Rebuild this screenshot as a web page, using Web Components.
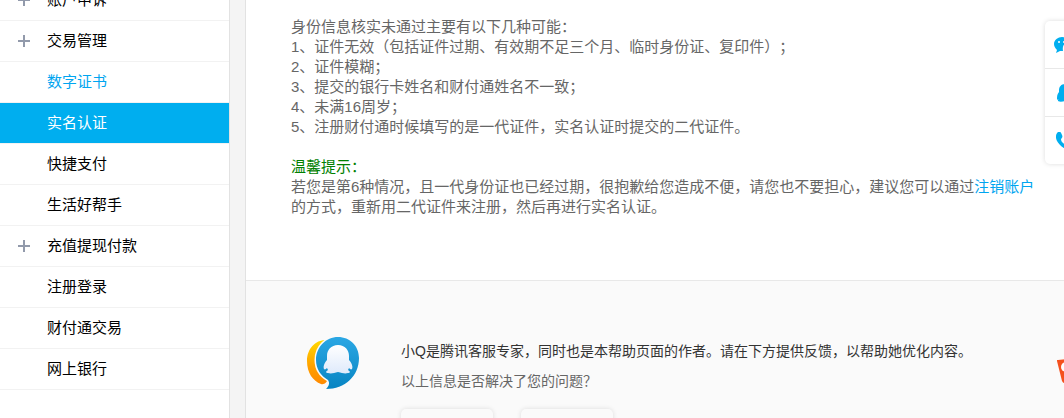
<!DOCTYPE html>
<html lang="zh-CN">
<head>
<meta charset="utf-8">
<meta name="viewport" content="width=device-width, initial-scale=1">
<title>实名认证</title>
<style>
html, body {
  height: 100%;
}
body {
  margin: 0;
  overflow: hidden;
  background: #f4f4f4;
  color: #666;
  font: 15px/20px "Liberation Sans", "Noto Sans CJK SC", sans-serif;
  text-spacing-trim: space-all;
}
</style>
</head>
<body>
<help-page>
  <side-nav slot="nav">
    <nav-item expandable>账户申诉</nav-item>
    <nav-item expandable>交易管理</nav-item>
    <nav-item linked>数字证书</nav-item>
    <nav-item active>实名认证</nav-item>
    <nav-item>快捷支付</nav-item>
    <nav-item>生活好帮手</nav-item>
    <nav-item expandable>充值提现付款</nav-item>
    <nav-item>注册登录</nav-item>
    <nav-item>财付通交易</nav-item>
    <nav-item>网上银行</nav-item>
  </side-nav>
  <help-article></help-article>
  <help-feedback>
    <span slot="intro">小Q是腾讯客服专家，同时也是本帮助页面的作者。请在下方提供反馈，以帮助她优化内容。</span>
    <span slot="question">以上信息是否解决了您的问题？</span>
  </help-feedback>
</help-page>
<contact-bar></contact-bar>
<feedback-badge></feedback-badge>

<script>
// 由模板字符串创建带 shadow root 的元素
const define = (name, html, setup) => {
  const template = document.createElement('template');
  template.innerHTML = html;

  customElements.define(name, class extends HTMLElement {
    constructor() {
      super();
      this.attachShadow({ mode: 'open' });
      this.shadowRoot.appendChild(template.content.cloneNode(true));
      if (setup) setup(this);
    }
  });
};

// 页面框架：左侧导航 + 右侧内容
define('help-page', `
<style>
:host {
  display: grid;
  grid-template-columns: 230px minmax(0, 1fr);
  gap: 15px;
  height: 100%;
}
main {
  display: flex;
  flex-direction: column;
  background: #fff;
  border-left: 1px solid #e2e2e2;
}
</style>
<slot name="nav"></slot>
<main><slot></slot></main>
`);

define('side-nav', `
<style>
:host {
  display: block;
  background: #fff;
  border-right: 1px solid #e2e2e2;
  overflow: hidden;
}
nav {
  margin-top: -20px;
}
</style>
<nav aria-label="帮助分类"><slot></slot></nav>
`);

define('nav-item', `
<style>
:host {
  display: block;
  border-bottom: 1px solid #f2f2f2;
}
a {
  display: grid;
  grid-template-columns: 12px 1fr;
  gap: 17px;
  align-items: center;
  height: 40px;
  padding-left: 18px;
  color: #000;
  text-decoration: none;
}
svg {
  visibility: hidden;
}
:host([expandable]) svg {
  visibility: visible;
}
:host([linked]) a {
  color: #00a5f0;
}
:host([active]) a {
  color: #fff;
  background: #00aeef;
}
</style>
<a href="#">
  <svg width="12" height="12" viewBox="0 0 12 12" aria-hidden="true">
    <path d="M5 0h2v5h5v2H7v5H5V7H0V5h5z" fill="#929aab"/>
  </svg>
  <span><slot></slot></span>
</a>
`, (el) => {
  const link = el.shadowRoot.querySelector('a');
  link.addEventListener('click', (e) => e.preventDefault());
  if (el.hasAttribute('active')) link.setAttribute('aria-current', 'page');
});

define('help-article', `
<style>
:host {
  display: block;
  padding: 17px 24px 63px 45px;
  border-bottom: 1px solid #e8e8e8;
}
p {
  margin: 0;
}
ol {
  margin: 0 0 20px;
  padding: 0;
  list-style: none;
}
.tip {
  color: #008000;
}
a {
  color: #00a5f0;
  text-decoration: none;
}
</style>
<p>身份信息核实未通过主要有以下几种可能：</p>
<ol>
  <li>1、证件无效（包括证件过期、有效期不足三个月、临时身份证、复印件）；</li>
  <li>2、证件模糊；</li>
  <li>3、提交的银行卡姓名和财付通姓名不一致；</li>
  <li>4、未满16周岁；</li>
  <li>5、注册财付通时候填写的是一代证件，实名认证时提交的二代证件。</li>
</ol>
<p class="tip">温馨提示：</p>
<p>若您是第6种情况，且一代身份证也已经过期，很抱歉给您造成不便，请您也不要担心，建议您可以通过<a href="#">注销账户</a>的方式，重新用二代证件来注册，然后再进行实名认证。</p>
`);

define('help-feedback', `
<style>
:host {
  display: flex;
  flex: 1;
  gap: 41px;
  padding: 55px 24px 0 60px;
  background: #fafafa;
  font-size: 14px;
}
svg {
  flex: none;
}
p {
  margin: 0 0 10px;
}
.intro {
  margin-top: 5px;
  color: #333;
}
.actions {
  display: flex;
  gap: 28px;
  margin-top: 18px;
}
button {
  width: 92px;
  height: 36px;
  border: 0;
  border-radius: 5px;
  background: #fafafa;
  box-shadow: 0 0 5px rgba(0, 0, 0, .12);
}
</style>
<svg width="54" height="54" viewBox="0 0 54 54" aria-hidden="true">
  <defs>
    <linearGradient id="blue" x1="0" y1="0" x2="0" y2="1">
      <stop offset="0" stop-color="#2ba7e4"/>
      <stop offset="1" stop-color="#0784c2"/>
    </linearGradient>
    <linearGradient id="orange" x1="0" y1="0" x2="0" y2="1">
      <stop offset="0" stop-color="#ffd900"/>
      <stop offset=".6" stop-color="#ffa000"/>
      <stop offset="1" stop-color="#ff8a00"/>
    </linearGradient>
    <linearGradient id="white" x1="0" y1="0" x2="0" y2="1">
      <stop offset="0" stop-color="#fff"/>
      <stop offset="1" stop-color="#dfeafb"/>
    </linearGradient>
  </defs>
  <path d="M20 4C9 4 1 13 1 25c0 12 6 20 14 23 3 1 7-2 6-5 0-2-3-4-5-6-7-9-6-24 4-33z" fill="url(#orange)"/>
  <path d="M32 1c12 0 21 9 21 21 0 18-14 31-33 31 3-3 4-6 2-9C15 40 10 33 10 24 10 11 20 1 32 1z" fill="url(#blue)" stroke="#fafafa" stroke-width="3" paint-order="stroke"/>
  <path d="M32 9c7 0 11 5 11 11v4c3 3 4 7 3 9-1 1-2 0-3-1l-1 2c3 2 2 3 0 3-3 1-6 0-10-1-4 1-7 2-10 1-2 0-3-1 0-3l-1-2c-1 1-2 2-3 1-1-2 0-6 3-9v-4c0-6 4-11 11-11z" fill="url(#white)"/>
</svg>
<div>
  <p class="intro"><slot name="intro"></slot></p>
  <p><slot name="question"></slot></p>
  <div class="actions">
    <button type="button" aria-label="是"></button>
    <button type="button" aria-label="否"></button>
  </div>
</div>
`);

// 悬浮联系方式，部分位于窗口右侧之外
define('contact-bar', `
<style>
:host {
  position: fixed;
  top: 21px;
  right: -21px;
  width: 40px;
  border-radius: 5px;
  background: #fff;
  box-shadow: 0 0 5px rgba(0, 0, 0, .14);
}
a {
  display: flex;
  align-items: center;
  justify-content: center;
  height: 47px;
  color: #00aeef;
}
a + a {
  border-top: 1px solid #e8e8e8;
}
svg {
  fill: currentColor;
}
</style>
<a href="#" aria-label="微信">
  <svg width="22" height="18" viewBox="0 0 22 18">
    <path d="M8 1c5 0 8 3 8 5-5 0-8 3-7 9H6l-4 2 1-3C1 12 0 10 0 8c0-4 4-7 8-7z"/>
    <path d="M16 7c3 0 6 2 6 5 0 1-1 3-2 4v2l-2-1c-5 1-8-2-8-5s3-5 6-5z"/>
    <circle cx="5" cy="6" r="1" fill="#fff"/>
    <circle cx="10" cy="6" r="1" fill="#fff"/>
    <circle cx="14" cy="11" r="1" fill="#fff"/>
    <circle cx="18" cy="11" r="1" fill="#fff"/>
  </svg>
</a>
<a href="#" aria-label="QQ">
  <svg width="16" height="18" viewBox="0 0 16 18">
    <path d="M8 0c4 0 6 3 6 6v2c2 2 2 5 2 7 0 1-1 1-2 0l-1 1c1 2-2 2-5 1-3 1-8 1-7-1l1-1c-1 1-2 1-2 0 0-2 0-5 2-7V6c0-3 2-6 6-6z"/>
  </svg>
</a>
<a href="#" aria-label="电话">
  <svg width="18" height="18" viewBox="0 0 18 18">
    <path d="M0 4c0-2 1-3 2-4 2-1 3 0 4 3 1 2 0 3-1 4 0 2 1 3 2 4s3 2 4 1c1 0 2-1 4 0 2 2 3 3 2 4l-3 2C8 18-1 10 0 4z"/>
  </svg>
</a>
`);

define('feedback-badge', `
<style>
:host {
  position: fixed;
  top: 358px;
  right: -19px;
  height: 26px;
}
button {
  padding: 0;
  border: 0;
  background: none;
}
svg {
  display: block;
}
</style>
<button type="button" aria-label="意见反馈">
  <svg width="26" height="26" viewBox="0 0 26 26">
    <path d="M0 3q-1-1 1-1L20 0q2 0 2 2l3 16q0 2-2 3L7 25q-1 0-2-2z" fill="#f4511e"/>
    <circle cx="9" cy="9" r="5" fill="#fff"/>
    <path d="M7 17l9-2v2l-9 2z" fill="#fff"/>
  </svg>
</button>
`);
</script>
</body>
</html>
